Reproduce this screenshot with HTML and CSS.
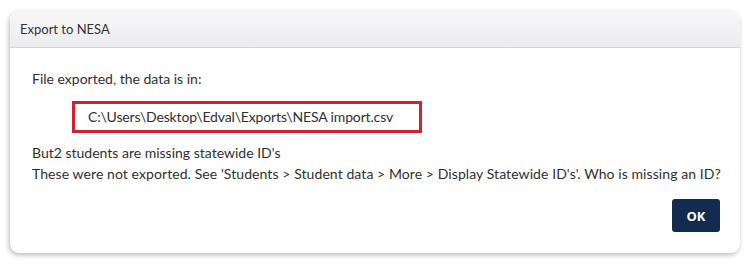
FILE: index.html
```html
<!DOCTYPE html>
<html>
<head>
<meta charset="utf-8">
<link rel="stylesheet" href="styles.css">
</head>
<body>
<div class="dialog">
  <div class="header">Export to NESA</div>
  <div class="body">
    <p class="line first">File exported, the data is in:</p>
    <div class="path">C:\Users\Desktop\Edval\Exports\NESA import.csv</div>
    <p class="line">But2 students are missing statewide ID's</p>
    <p class="line wide">These were not exported. See 'Students &gt; Student data &gt; More &gt; Display Statewide ID's'. Who is missing an ID?</p>
    <div class="actions"><button class="ok">OK</button></div>
  </div>
</div>
</body>
</html>
```
FILE: styles.css
```css
html, body { margin: 0; padding: 0; background: #ffffff; }
body { padding: 11px 12px 18px 10px; font-family: "Lato", "Open Sans", sans-serif; color: #2f2f2f; }
.dialog {
  background: #fff;
  border-radius: 9px;
  box-shadow: -1px 2px 5px rgba(0,0,0,0.28);
  overflow: hidden;
}
.header {
  height: 36px;
  line-height: 36px;
  padding-left: 10px;
  font-size: 13px;
  color: #333;
  background: linear-gradient(#f7f7f8, #ececef);
  border-bottom: 1px solid #d6d6d8;
}
.body { padding: 20px 22px 21px 22px; font-size: 14px; }
.line { margin: 0; line-height: 21px; white-space: nowrap; }
.line.first { margin-bottom: 12px; }
.line.wide { letter-spacing: 0.08px; }
.path {
  margin: 0 0 9px 40px;
  width: 331px;
  height: 26px;
  line-height: 26px;
  border: 3px solid #d2202e;
  padding-left: 13px;
  letter-spacing: -0.15px;
  white-space: nowrap;
}
.actions { display: flex; justify-content: flex-end; margin-top: 15px; }
.ok {
  width: 48px; height: 33px;
  background: #142a4f;
  color: #fff;
  border: none;
  border-radius: 3px;
  font-family: "Open Sans", sans-serif;
  font-weight: 700;
  font-size: 13px;
  margin-right: -2px;
}
```
